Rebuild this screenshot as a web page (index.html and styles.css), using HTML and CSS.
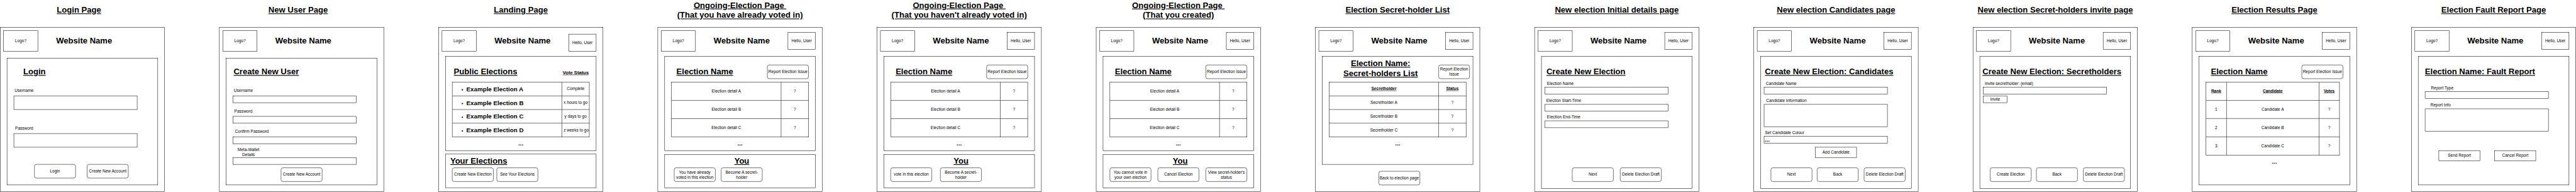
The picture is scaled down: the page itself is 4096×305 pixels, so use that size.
FILE: index.html
```html
<!DOCTYPE html>
<html lang="en">
<head>
<meta charset="utf-8">
<title>Election website wireframes</title>
<link rel="stylesheet" href="styles.css">
</head>
<body>
<div class="viewport">
<main class="board">

  <section class="page page--login">
    <h2 class="page-title page-title--left">Login Page</h2>
    <div class="frame">
      <header class="header header--tall"><div class="logo">Logo?</div><h1 class="site">Website Name</h1></header>
      <div class="panel panel--low">
        <div class="heading-row"><h3 class="heading">Login</h3></div>
        <div class="form">
          <label class="label w60">Username</label>
          <div class="input input--big"></div>
          <label class="label w60">Password</label>
          <div class="input input--big"></div>
        </div>
        <div class="actions"><button class="btn">Login</button><button class="btn">Create New Account</button></div>
      </div>
    </div>
  </section>

  <section class="page page--register">
    <h2 class="page-title page-title--left">New User Page</h2>
    <div class="frame">
      <header class="header header--tall"><div class="logo">Logo?</div><h1 class="site">Website Name</h1></header>
      <div class="panel panel--low">
        <div class="heading-row"><h3 class="heading">Create New User</h3></div>
        <div class="form">
          <label class="label w60">Username</label>
          <div class="input"></div>
          <label class="label w60">Password</label>
          <div class="input"></div>
          <label class="label w110">Confirm Password</label>
          <div class="input"></div>
          <label class="label label--two w90">Meta-Wallet<br>Details</label>
          <div class="input input--tight"></div>
        </div>
        <div class="actions"><button class="btn">Create New Account</button></div>
      </div>
    </div>
  </section>

  <section class="page page--landing">
    <h2 class="page-title">Landing Page</h2>
    <div class="frame">
      <header class="header"><div class="logo">Logo?</div><h1 class="site">Website Name</h1><div class="user user--low">Hello, User</div></header>
      <div class="panel panel--short">
        <div class="heading-row"><h3 class="heading">Public Elections</h3><h4 class="subheading">Vote Status</h4></div>
        <div class="table rows-40">
          <div class="cell cell--item">Example Election A</div><div class="cell">Complete</div>
          <div class="cell cell--item">Example Election B</div><div class="cell">x hours to go</div>
          <div class="cell cell--item">Example Election C</div><div class="cell">y days to go</div>
          <div class="cell cell--item">Example Election D</div><div class="cell">&nbsp;z weeks to go</div>
        </div>
        <div class="more">...</div>
      </div>
      <div class="panel lower lower--landing">
        <h3 class="heading heading--lower">Your Elections</h3>
        <div class="actions"><button class="btn">Create New Election</button><button class="btn">See Your Elections</button></div>
      </div>
    </div>
  </section>

  <section class="page page--voted">
    <h2 class="page-title page-title--two">Ongoing-Election Page&nbsp;<br>(That you have already voted in)</h2>
    <div class="frame">
      <header class="header"><div class="logo">Logo?</div><h1 class="site">Website Name</h1><div class="user">Hello, User</div></header>
      <div class="panel panel--short">
        <div class="heading-row"><h3 class="heading heading--election">Election Name</h3><button class="btn">Report Election Issue</button></div>
        <div class="table rows-53">
          <div class="cell">Election detail A</div><div class="cell">?</div>
          <div class="cell">Election detail B</div><div class="cell">?</div>
          <div class="cell">Election detail C</div><div class="cell">?</div>
        </div>
        <div class="more">...</div>
      </div>
      <div class="panel lower">
        <h3 class="heading heading--lower heading--you">You</h3>
        <div class="actions"><button class="btn">You have already<br>voted in this election</button><button class="btn">Become A secret-<br>holder</button></div>
      </div>
    </div>
  </section>

  <section class="page page--unvoted">
    <h2 class="page-title page-title--two">Ongoing-Election Page&nbsp;<br>(That you haven't already voted in)</h2>
    <div class="frame">
      <header class="header"><div class="logo">Logo?</div><h1 class="site">Website Name</h1><div class="user">Hello, User</div></header>
      <div class="panel panel--short">
        <div class="heading-row"><h3 class="heading heading--election">Election Name</h3><button class="btn">Report Election Issue</button></div>
        <div class="table rows-53">
          <div class="cell">Election detail A</div><div class="cell">?</div>
          <div class="cell">Election detail B</div><div class="cell">?</div>
          <div class="cell">Election detail C</div><div class="cell">?</div>
        </div>
        <div class="more">...</div>
      </div>
      <div class="panel lower">
        <h3 class="heading heading--lower heading--you">You</h3>
        <div class="actions"><button class="btn">vote in this election</button><button class="btn">Become A secret-<br>holder</button></div>
      </div>
    </div>
  </section>

  <section class="page page--owner">
    <h2 class="page-title page-title--two">Ongoing-Election Page&nbsp;<br>(That you created)</h2>
    <div class="frame">
      <header class="header"><div class="logo">Logo?</div><h1 class="site">Website Name</h1><div class="user">Hello, User</div></header>
      <div class="panel panel--short">
        <div class="heading-row"><h3 class="heading heading--election">Election Name</h3><button class="btn">Report Election Issue</button></div>
        <div class="table rows-53">
          <div class="cell">Election detail A</div><div class="cell">?</div>
          <div class="cell">Election detail B</div><div class="cell">?</div>
          <div class="cell">Election detail C</div><div class="cell">?</div>
        </div>
        <div class="more">...</div>
      </div>
      <div class="panel lower">
        <h3 class="heading heading--lower heading--you">You</h3>
        <div class="actions"><button class="btn">You cannot vote in<br>your own election</button><button class="btn">Cancel Election</button><button class="btn">View secret-holder's<br>status</button></div>
      </div>
    </div>
  </section>

  <section class="page page--holders">
    <h2 class="page-title">Election Secret-holder List</h2>
    <div class="frame">
      <header class="header"><div class="logo">Logo?</div><h1 class="site">Website Name</h1><div class="user">Hello, User</div></header>
      <div class="panel panel--holders">
        <div class="heading-row heading-row--two"><h3 class="heading heading--two">Election Name:<br>Secret-holders List</h3><button class="btn btn--narrow">Report Election<br>Issue</button></div>
        <div class="table rows-40">
          <div class="cell cell--head">Secretholder</div><div class="cell cell--head">Status</div>
          <div class="cell">Secretholder A</div><div class="cell">?</div>
          <div class="cell">Secretholder B</div><div class="cell">?</div>
          <div class="cell">Secretholder C</div><div class="cell">?</div>
        </div>
        <div class="more">...</div>
      </div>
      <div class="actions"><button class="btn">Back to election page</button></div>
    </div>
  </section>

  <section class="page page--details">
    <h2 class="page-title">New election Initial details page</h2>
    <div class="frame">
      <header class="header"><div class="logo">Logo?</div><h1 class="site">Website Name</h1><div class="user">Hello, User</div></header>
      <div class="panel panel--long">
        <div class="heading-row"><h3 class="heading">Create New Election</h3></div>
        <div class="form form--election">
          <label class="label w90">Election Name</label>
          <div class="input"></div>
          <label class="label w110">Election Start-Time</label>
          <div class="input"></div>
          <label class="label label--close w110">Election End-Time</label>
          <div class="input"></div>
        </div>
        <div class="actions"><button class="btn">Next</button><button class="btn">Delete Election Draft</button></div>
      </div>
    </div>
  </section>

  <section class="page page--candidates">
    <h2 class="page-title">New election Candidates page</h2>
    <div class="frame">
      <header class="header"><div class="logo">Logo?</div><h1 class="site">Website Name</h1><div class="user">Hello, User</div></header>
      <div class="panel panel--long">
        <div class="heading-row"><h3 class="heading">Create New Election: Candidates</h3></div>
        <div class="form form--election">
          <label class="label w100">Candidate Name</label>
          <div class="input"></div>
          <label class="label w130">Candidate Information</label>
          <div class="input input--area"></div>
          <label class="label label--close w120">Set Candidate Colour</label>
          <div class="input input--picker">...</div>
          <button class="btn btn--square">Add Candidate</button>
        </div>
        <div class="actions actions--three"><button class="btn">Next</button><button class="btn">Back</button><button class="btn">Delete Election Draft</button></div>
      </div>
    </div>
  </section>

  <section class="page page--invite">
    <h2 class="page-title">New election Secret-holders invite page</h2>
    <div class="frame">
      <header class="header"><div class="logo">Logo?</div><h1 class="site">Website Name</h1><div class="user">Hello, User</div></header>
      <div class="panel panel--long">
        <div class="heading-row"><h3 class="heading">Create New Election: Secretholders</h3></div>
        <div class="form form--election">
          <label class="label w150">Invite secretholder: (email)</label>
          <div class="input"></div>
          <button class="btn btn--invite">Invite</button>
        </div>
        <div class="actions actions--three"><button class="btn">Create Election</button><button class="btn">Back</button><button class="btn">Delete Election Draft</button></div>
      </div>
    </div>
  </section>

  <section class="page page--results">
    <h2 class="page-title">Election Results Page</h2>
    <div class="frame">
      <header class="header"><div class="logo">Logo?</div><h1 class="site">Website Name</h1><div class="user">Hello, User</div></header>
      <div class="panel panel--results">
        <div class="heading-row"><h3 class="heading heading--election">Election Name</h3><button class="btn">Report Election Issue</button></div>
        <div class="table table--results">
          <div class="cell cell--head">Rank</div><div class="cell cell--head">Candidate</div><div class="cell cell--head">Votes</div>
          <div class="cell">1</div><div class="cell">Candidate A</div><div class="cell">?</div>
          <div class="cell">2</div><div class="cell">Candidate B</div><div class="cell">?</div>
          <div class="cell">3</div><div class="cell">Candidate C</div><div class="cell">?</div>
        </div>
        <div class="more">...</div>
      </div>
    </div>
  </section>

  <section class="page page--fault">
    <h2 class="page-title">Election Fault Report Page</h2>
    <div class="frame">
      <header class="header"><div class="logo">Logo?</div><h1 class="site">Website Name</h1><div class="user">Hello, User</div></header>
      <div class="panel panel--results">
        <div class="heading-row"><h3 class="heading">Election Name: Fault Report</h3></div>
        <div class="form form--fault">
          <label class="label w100">Report Type</label>
          <div class="input"></div>
          <label class="label w90">Report Info</label>
          <div class="input input--area"></div>
        </div>
        <div class="actions"><button class="btn btn--square">Send Report</button><button class="btn btn--square">Cancel Report</button></div>
      </div>
    </div>
  </section>

</main>
</div>
</body>
</html>
```

FILE: styles.css
```css
* { box-sizing: border-box; margin: 0; padding: 0; }

body {
  background: #fff;
  font-family: "Liberation Sans", Arial, Helvetica, sans-serif;
  font-size: 12px;
  line-height: 15px;
  color: #000;
}

.viewport {
  width: 4096px;
  height: 305px;
  overflow: hidden;
}

.board {
  display: flex;
  gap: 159px;
  width: 7521px;
  height: 560px;
  transform: scale(0.544608);
  transform-origin: 0 0;
}

.page { flex: none; width: 481px; }

.page-title {
  display: flex;
  align-items: center;
  justify-content: center;
  height: 59px;
  margin-bottom: 20px;
  padding-bottom: 2px;
  font-size: 24px;
  line-height: 29px;
  text-align: center;
  text-decoration: underline;
  white-space: nowrap;
}
.page-title--left { padding-right: 20px; }
.page-title--two { padding-bottom: 1px; }

.frame {
  display: flex;
  flex-direction: column;
  height: 481px;
  border: 1px solid #000;
}

/* Header */
.header {
  display: grid;
  grid-template-columns: 101px 269px 81px;
  grid-template-rows: 61px;
  align-items: center;
  flex: none;
  height: 84px;
  padding: 9px 0 0 9px;
}
.header--tall { height: 89px; }

.logo, .user {
  display: flex;
  align-items: center;
  justify-content: center;
  border: 1px solid #000;
}
.logo { height: 61px; }
.user { height: 51px; }
.user--low { align-self: end; }

.site {
  padding-bottom: 2px;
  font-size: 24px;
  line-height: 29px;
  text-align: center;
}

/* Panels */
.panel {
  display: flex;
  flex-direction: column;
  flex: none;
  width: 441px;
  margin-left: 19px;
  padding-top: 24px;
  border: 1px solid #000;
}
.panel--low { height: 371px; padding-top: 19px; }
.panel--short { height: 276px; }
.panel--holders { height: 316px; padding-top: 0; }
.panel--long { height: 386px; }
.panel--results { height: 376px; }

.lower {
  height: 98.5px;
  margin-top: 10.25px;
  padding-top: 0;
}
.lower--landing { margin-top: 9px; }

/* Headings */
.heading-row {
  display: flex;
  align-items: center;
  justify-content: space-between;
  flex: none;
  height: 41px;
  padding-right: 19px;
}
.heading {
  padding-bottom: 2px;
  font-size: 24px;
  line-height: 29px;
  text-decoration: underline;
  white-space: nowrap;
}
.subheading {
  width: 80px;
  padding-top: 5px;
  font-size: 14px;
  text-align: center;
  text-decoration: underline;
  white-space: nowrap;
}
.heading--election { margin-left: 34px; }
.heading--lower { height: 39px; line-height: 37px; }
.heading--you { height: 37.75px; margin-left: 203px; line-height: 35px; }
.heading-row--two { height: 65px; align-items: flex-end; padding-right: 9px; }
.heading--two { margin-left: 61px; text-align: center; }

/* Forms */
.form {
  display: flex;
  flex-direction: column;
  align-items: flex-start;
  flex: none;
  padding-left: 19px;
}
.form--election { padding-left: 9px; }

.label {
  height: 19px;
  line-height: 19px;
  margin-top: 15px;
  text-align: center;
  white-space: nowrap;
}
.label:first-child { margin-top: 25px; }
.form--election .label { margin-top: 10px; }
.form--election .label:first-child { margin-top: 5px; }
.form--election .label--close { margin-top: 7.5px; }
.form--fault .label { margin-top: 10px; }
.form--fault .label:first-child { margin-top: 17.5px; }
.page--login .label:not(:first-child) { margin-top: 45px; }
.form .label--two { height: 29px; margin-top: 10px; line-height: 15px; }

.w60 { width: 61px; }
.w90 { width: 91px; }
.w100 { width: 101px; }
.w110 { width: 111px; }
.w120 { width: 121px; }
.w130 { width: 131px; }
.w150 { width: 151px; }

.input {
  width: 361px;
  height: 21px;
  margin-top: 5px;
  border: 1px solid #000;
}
.input--big { height: 41px; }
.input--tight { margin-top: 0; }
.form--election .input, .form--fault .input { margin-top: 0; }
.input--area { height: 66px; }
.input--picker {
  padding-left: 1px;
  font-size: 18px;
  font-weight: bold;
  line-height: 18px;
}

/* Buttons */
.btn {
  flex: none;
  width: 121px;
  height: 41px;
  border: 1px solid #000;
  border-radius: 6px;
  background: none;
  font: inherit;
  color: inherit;
  text-align: center;
  white-space: nowrap;
}
.btn--narrow { width: 91px; }
.btn--square { height: 31px; border-radius: 0; }
.form .btn--square { margin: 11.5px 0 0 150px; }
.btn--invite { width: 71px; height: 21px; margin-top: 4px; border-radius: 0; }

.actions { display: flex; flex: none; }
.page--login .actions { gap: 33px; margin: 49px 0 0 79px; }
.page--register .actions { margin: 9px 0 0 159px; }
.page--landing .actions { gap: 9px; margin-left: 19px; }
.page--voted .actions { gap: 16px; margin-left: 27px; }
.page--unvoted .actions { gap: 24px; margin-left: 19px; }
.page--owner .actions { gap: 19px; margin-left: 19px; }
.page--holders .actions { margin: 19px 0 0 184px; }
.page--details .actions { gap: 19px; margin: 116.5px 0 0 89px; }
.page--candidates .actions { margin-top: 29px; }
.page--invite .actions { margin-top: 189px; }
.page--fault .actions { gap: 42px; margin: 56.5px 0 0 59px; }
.actions--three { gap: 14px; margin-left: 29px; }
.actions--three .btn:last-child { margin-left: 2px; }

.page--login .heading { margin-left: 47px; }
.page--register .heading { margin-left: 21px; }
.page--landing .heading { margin-left: 24px; }
.page--landing .heading--lower { margin-left: 13.5px; }
.page--details .heading { margin-left: 14px; }
.page--candidates .heading { margin-left: 12px; }
.page--invite .heading { margin-left: 7px; }
.page--fault .heading { margin-left: 19px; }

/* Tables */
.table {
  display: grid;
  grid-template-columns: 320px 80px;
  flex: none;
  width: 401px;
  margin: 9px 0 0 19px;
  border: solid #000;
  border-width: 1px 0 0 1px;
}
.rows-40 { grid-auto-rows: 40px; }
.rows-53 { grid-template-rows: 53px 54px 53px; }
.table--results {
  grid-template-columns: 60px 270px 60px;
  grid-template-rows: 53px 53px 54px 53px;
  width: 391px;
}
.cell {
  display: flex;
  align-items: center;
  justify-content: center;
  border: solid #000;
  border-width: 0 1px 1px 0;
  white-space: nowrap;
}
.cell--head { font-weight: bold; text-decoration: underline; }
.cell--item {
  justify-content: flex-start;
  padding-left: 26.5px;
  font-size: 18px;
  font-weight: bold;
  line-height: 22px;
}
.cell--item::before {
  content: "";
  width: 4.5px;
  height: 4.5px;
  margin: 5px 9.5px 0 0;
  border-radius: 50%;
  background: #000;
}

.more {
  height: 21px;
  margin-top: 9px;
  font-size: 18px;
  font-weight: bold;
  line-height: 21px;
  text-align: center;
}
```
